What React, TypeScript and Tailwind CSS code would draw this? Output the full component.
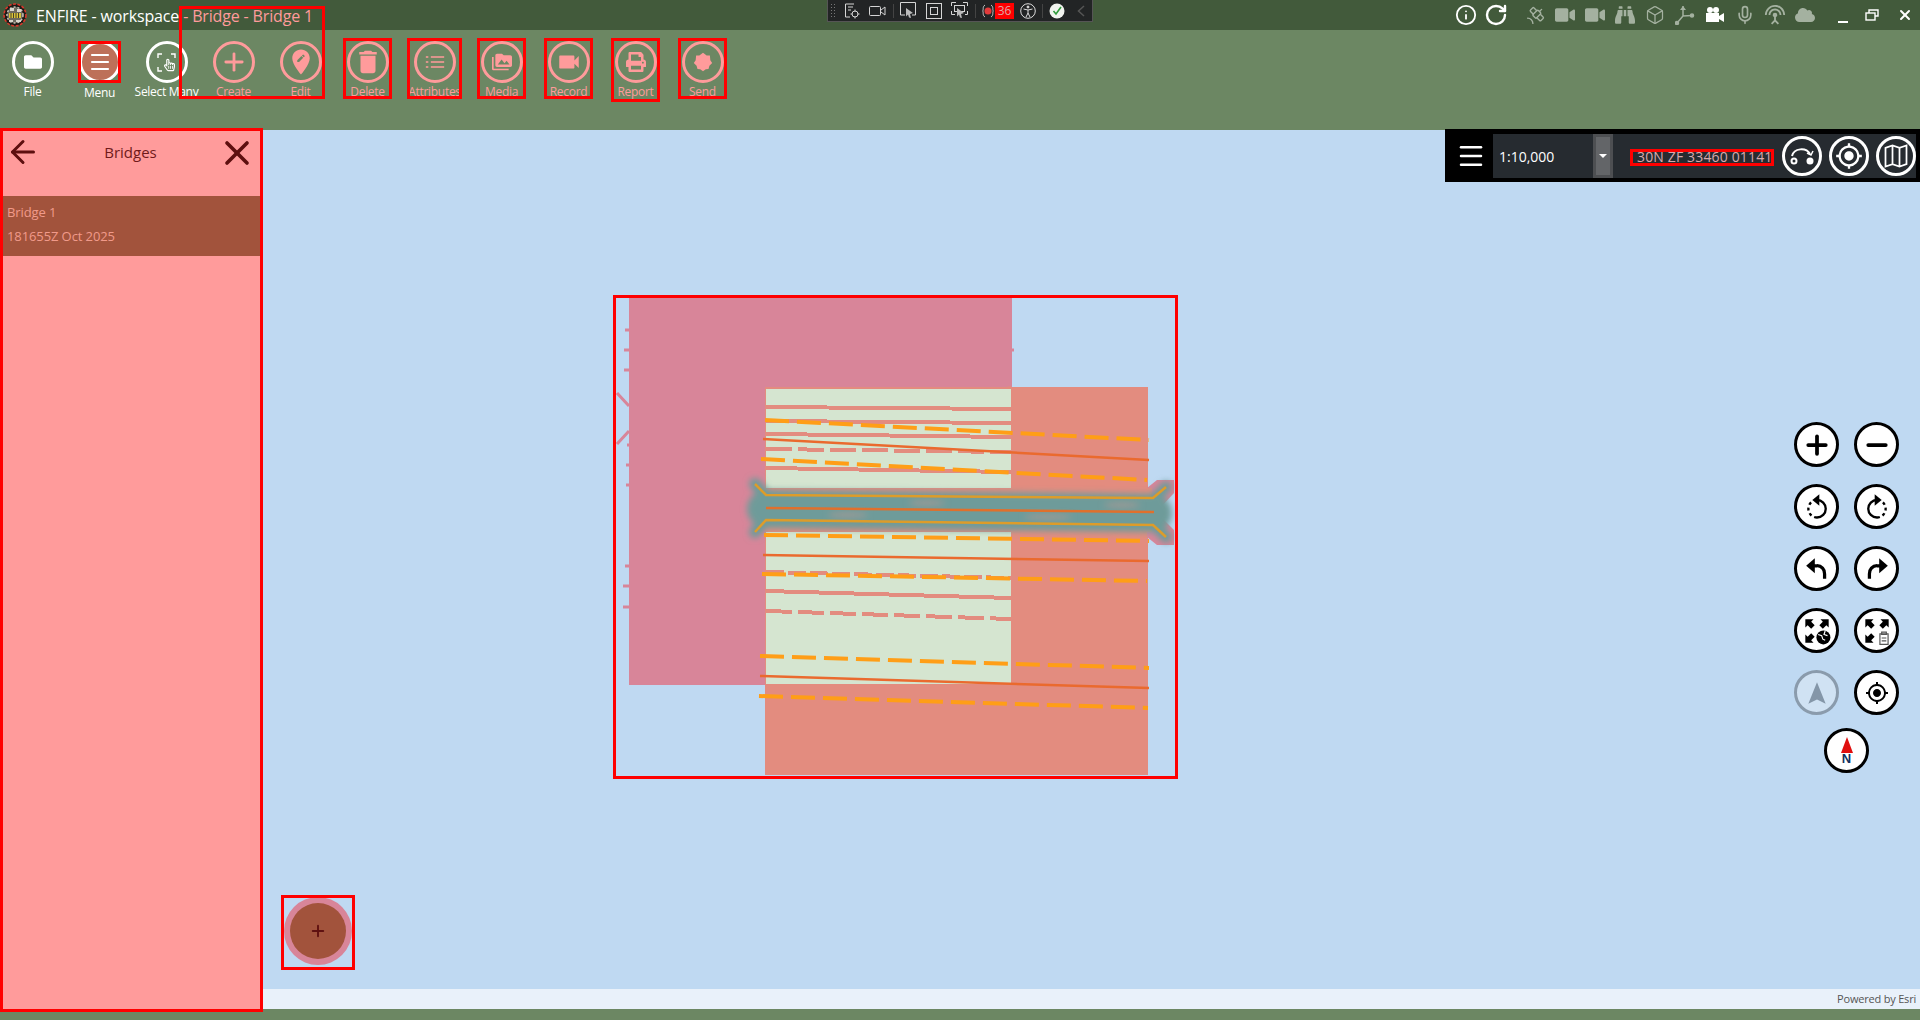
import type { ReactNode } from 'react'
import { Plus, Minus, Menu, Info, RotateCw, Box, Mic, X, ArrowLeft, Satellite } from 'lucide-react'
import { FaFolder, FaBinoculars, FaCloud, FaVideo, FaPrint, FaRegHandPointer } from 'react-icons/fa'
import { MdDelete, MdEditLocation, MdPermMedia, MdVideocam, MdGpsFixed, MdSettingsInputAntenna } from 'react-icons/md'

function SendIcon() {
  return (
    <svg viewBox="0 0 24 24" className="w-[22px] h-[22px]" fill="currentColor">
      <path d="M12 2l4 3h3.500l0.500 5 2 3-3 3-1 3.500-3 0.500-3 2-3-2-3-0.500-1-3.500-3-3 2-3 0.500-5H8z" />
    </svg>
  )
}

function SelectIcon() {
  return (
    <div className="relative w-[19px] h-[19px]">
      <svg viewBox="0 0 19 19" className="w-[19px] h-[19px]" fill="none" stroke="currentColor" strokeWidth="1.400">
        <path d="M1 5V1h4M14 1h4v4M1 14v4h4" />
      </svg>
      <FaRegHandPointer className="absolute left-[7px] top-[5px] w-[11px] h-[14px]" />
    </div>
  )
}

function AttrIcon() {
  return (
    <svg viewBox="0 0 24 24" className="w-[20px] h-[20px]" fill="none" stroke="currentColor" strokeWidth="1.800">
      <path d="M1 6h3M7 6h16M1 12h3M7 12h16M1 18h3M7 18h16" />
    </svg>
  )
}

function ToolItem({ label, tint, icon, fill }: { label: string; tint?: boolean; icon: ReactNode; fill?: boolean }) {
  return (
    <div className={`w-[67px] flex flex-col items-center ${tint ? 'text-[#ff9b9b]' : 'text-white'}`}>
      <div className={`w-[42px] h-[42px] rounded-full border-[3px] border-current flex items-center justify-center ${fill ? 'bg-[#bd7059]' : ''}`}>
        {icon}
      </div>
      <span className={`text-[12px] leading-[16px] whitespace-nowrap tracking-[-0.3px] ${fill ? 'mt-[2px]' : 'mt-px'}`}>{label}</span>
    </div>
  )
}

function Logo() {
  return (
    <svg viewBox="0 0 24 24" className="w-[24px] h-[24px] ml-[3px] shrink-0">
      <circle cx="12" cy="12" r="11" fill="#1d1a16" stroke="#d8362a" strokeWidth="1.600" strokeDasharray="3 1.500" />
      <circle cx="12" cy="12" r="8" fill="#6d6a60" stroke="#c9c5b8" strokeWidth="1.500" strokeDasharray="2 2" />
      <path d="M7 5h4v3H7zM14 6h4v3h-4zM6 17h4v2H6zM13 17h5v2h-5z" fill="#d9d6cc" />
      <rect x="6" y="10" width="12" height="5" fill="#d8c23a" />
      <path d="M8 10v5M10.500 10v5M13 10v5M15.500 10v5" stroke="#222" strokeWidth="0.800" />
    </svg>
  )
}

function MiddleBar() {
  return (
    <div className="absolute left-[827px] top-0 w-[266px] h-[22px] bg-[#222425] border-b border-x border-[#555] flex items-center text-[#d5d5d5]">
      <svg viewBox="0 0 6 16" className="ml-[3px] w-[6px] h-[16px]" fill="#777">
        <path d="M0 1h1v1H0zM3 1h1v1H3zM0 4h1v1H0zM3 4h1v1H3zM0 7h1v1H0zM3 7h1v1H3zM0 10h1v1H0zM3 10h1v1H3zM0 13h1v1H0zM3 13h1v1H3z" />
      </svg>
      <svg viewBox="0 0 16 16" className="ml-[7px] w-[16px] h-[16px]" fill="none" stroke="currentColor">
        <path d="M10 1H1.500v13H6M4 4h5M4 7h3" />
        <circle cx="11" cy="11" r="3" />
        <path d="M11 6.500v2M11 13.500v2M6.500 11h2M13.500 11h2" />
      </svg>
      <svg viewBox="0 0 17 12" className="ml-[9px] w-[17px] h-[12px]" fill="none" stroke="currentColor">
        <rect x="0.500" y="1.500" width="11" height="9" rx="1" />
        <path d="M12 5l4-3v8l-4-3" />
      </svg>
      <div className="ml-[7px] w-px h-[14px] bg-[#444]" />
      <svg viewBox="0 0 17 17" className="ml-[6px] w-[17px] h-[17px]" fill="none" stroke="currentColor">
        <path d="M5 13H0.500V0.500h15V13H12" />
        <path d="M6 6l7 5-3 1 1 4-2-0.500-1-3-2 2z" fill="#bbb" stroke="none" />
      </svg>
      <svg viewBox="0 0 16 16" className="ml-[9px] w-[16px] h-[16px]" fill="none" stroke="currentColor">
        <rect x="0.500" y="0.500" width="15" height="15" />
        <rect x="4.500" y="4.500" width="7" height="7" />
      </svg>
      <svg viewBox="0 0 17 17" className="ml-[9px] w-[17px] h-[17px]" fill="none" stroke="currentColor">
        <path d="M0.500 4V0.500H5M12 0.500h4.500V4M0.500 9v3.500H4M16.500 9v3.500H14" />
        <rect x="3.500" y="3.500" width="10" height="6" />
        <path d="M6 6l7 5-3 1 1 4-2-0.500-1-3-2 2z" fill="#bbb" stroke="none" />
      </svg>
      <div className="ml-[7px] w-px h-[14px] bg-[#444]" />
      <svg viewBox="0 0 12 14" className="ml-[6px] w-[12px] h-[14px]" fill="none" stroke="#ccc">
        <path d="M3 1C0 3 2 6 0.500 7 2 8 0 11 3 13M9 1c3 2 1 5 2.500 6C10 8 12 11 9 13" />
        <circle cx="6" cy="7" r="3.500" fill="#e23b3b" stroke="none" />
      </svg>
      <span className="ml-px w-[19px] h-[16px] bg-[#ff0000] text-[#e2a5a5] text-[12px] leading-[16px] text-center">36</span>
      <svg viewBox="0 0 16 16" className="ml-[6px] w-[16px] h-[16px]" fill="none" stroke="#ddd">
        <circle cx="8" cy="8" r="7.300" />
        <circle cx="8" cy="4" r="1" fill="#ddd" />
        <path d="M3.500 6L8 7l4.500-1M8 7v3l-2 4M8 10l2 4" />
      </svg>
      <div className="ml-[6px] w-px h-[14px] bg-[#444]" />
      <svg viewBox="0 0 16 16" className="ml-[6px] w-[16px] h-[16px]" fill="none">
        <circle cx="8" cy="8" r="7.500" fill="#f1f3ef" />
        <path d="M4.500 8l2.500 3 5-7" stroke="#2f9b3b" strokeWidth="1.600" />
      </svg>
      <svg viewBox="0 0 8 12" className="ml-[12px] w-[8px] h-[12px]" fill="none" stroke="#555" strokeWidth="1.500">
        <path d="M7 1L1.500 6 7 11" />
      </svg>
    </div>
  )
}

function StatusIcons() {
  return (
    <div className="ml-auto flex items-center h-full">
      <Info className="w-[22px] h-[22px] text-white" strokeWidth={2} />
      <RotateCw className="w-[24px] h-[24px] ml-[7px] text-white" strokeWidth={2.400} />
      <div className="flex items-center text-[#a4b1a0]">
        <Satellite className="w-[21px] h-[21px] ml-[17px]" strokeWidth={1.600} />
        <FaVideo className="w-[20px] h-[20px] ml-[9px]" />
        <FaVideo className="w-[20px] h-[20px] ml-[10px]" />
        <FaBinoculars className="w-[20px] h-[20px] ml-[10px]" />
        <Box className="w-[20px] h-[20px] ml-[10px]" strokeWidth={1.500} />
        <svg viewBox="0 0 20 20" className="w-[20px] h-[20px] ml-[10px]" fill="currentColor" stroke="currentColor" strokeWidth="1.500">
          <path d="M8 1v10l9-0.500M8 11l-6 7" fill="none" />
          <path d="M5 5l3-4 3 4z" stroke="none" />
          <circle cx="17" cy="10.500" r="1.500" />
          <circle cx="2" cy="18" r="1.500" />
        </svg>
      </div>
      <svg viewBox="0 0 20 20" className="w-[20px] h-[20px] ml-[10px]" fill="#fff">
        <circle cx="5" cy="5" r="3" />
        <circle cx="11" cy="5" r="3" />
        <path d="M1 8h13v9H1zM14 11l5-3v9l-5-3z" />
      </svg>
      <div className="flex items-center text-[#a4b1a0]">
        <Mic className="w-[20px] h-[20px] ml-[10px]" />
        <MdSettingsInputAntenna className="w-[22px] h-[22px] ml-[9px]" />
        <FaCloud className="w-[20px] h-[20px] ml-[9px]" />
      </div>
      <svg viewBox="0 0 10 10" className="w-[10px] h-[10px] ml-[23px] mt-[6px]" stroke="#fff" strokeWidth="2">
        <path d="M0 9h10" />
      </svg>
      <svg viewBox="0 0 14 12" className="w-[14px] h-[12px] ml-[17px]" fill="none" stroke="#fff" strokeWidth="1.400">
        <rect x="1" y="4" width="9" height="7" />
        <path d="M4 4V1h9v6h-3" />
      </svg>
      <X className="w-[16px] h-[16px] ml-[18px] mr-[7px] text-white" strokeWidth={3} />
    </div>
  )
}

function ScaleCircle({ children }: { children: ReactNode }) {
  return (
    <div className="w-[40px] h-[40px] rounded-full border-[3px] border-white flex items-center justify-center">
      {children}
    </div>
  )
}

function ScaleBar() {
  return (
    <div className="absolute right-0 top-[-1px] w-[475px] h-[53px] bg-black flex pt-[5px] pb-[4px] px-[4px]">
      <div className="w-[44px] flex items-center justify-center text-white">
        <Menu className="w-[30px] h-[30px]" strokeWidth={2} />
      </div>
      <div className="flex-1 flex items-center bg-[#262b30] text-white">
        <span className="w-[100px] pl-[6px] text-[14px]">1:10,000</span>
        <div className="w-[20px] self-stretch border-[3px] border-[#4d4f52] bg-[#636568] flex items-center justify-center">
          <div className="w-0 h-0 border-x-[4px] border-x-transparent border-t-[4px] border-t-white" />
        </div>
        <span className="ml-[24px] w-[140px] text-[14px] text-[#d9a9ad] whitespace-nowrap tracking-[0.15px]">30N ZF 33460 01141</span>
        <div className="ml-auto flex gap-[7px]">
          <ScaleCircle>
            <svg viewBox="0 0 26 20" className="w-[26px] h-[20px]" fill="none" stroke="#fff" strokeWidth="2">
              <circle cx="5" cy="15" r="2.500" />
              <path d="M3 10C5 2 17 1 21 8" />
              <path d="M18 7l4 2 2-4" strokeWidth="1.500" />
              <circle cx="21" cy="15" r="3.500" fill="#fff" stroke="none" />
            </svg>
          </ScaleCircle>
          <ScaleCircle>
            <MdGpsFixed className="w-[28px] h-[28px] text-white" />
          </ScaleCircle>
          <ScaleCircle>
            <svg viewBox="0 0 24 24" className="w-[28px] h-[28px]" fill="none" stroke="#fff" strokeWidth="1.500">
              <path d="M3 5l6-2 6 2 6-2v16l-6 2-6-2-6 2zM9 3v16M15 5v16" />
            </svg>
          </ScaleCircle>
        </div>
      </div>
    </div>
  )
}

function RoundBtn({ children, off }: { children: ReactNode; off?: boolean }) {
  return (
    <div className={`w-[45px] h-[45px] rounded-full border-[3.500px] flex items-center justify-center ${off ? 'border-[#8a9bac] bg-[#d0e2f3] text-[#8496a8]' : 'border-black bg-white text-black'}`}>
      {children}
    </div>
  )
}

function RotateIcon({ flip }: { flip?: boolean }) {
  return (
    <svg viewBox="0 0 24 24" className={`w-[28px] h-[28px] ${flip ? '-scale-x-100' : ''}`} fill="none" stroke="currentColor" strokeWidth="2">
      <path d="M12 6a7.500 7.500 0 0 1 0 15" />
      <path d="M12 21a7.500 7.500 0 0 1-5-13" strokeDasharray="2.500 2.500" />
      <path d="M14 1v10L8 6z" fill="currentColor" stroke="none" />
    </svg>
  )
}

function UndoIcon({ flip }: { flip?: boolean }) {
  return (
    <svg viewBox="0 0 24 24" className={`w-[26px] h-[26px] ${flip ? '-scale-x-100' : ''}`} fill="none" stroke="currentColor" strokeWidth="3">
      <path d="M8 9h4a7 7 0 0 1 7 7.500V21" />
      <path d="M10 2v14L2 9z" fill="currentColor" stroke="none" />
    </svg>
  )
}

function ExtentIcon({ children }: { children: ReactNode }) {
  return (
    <svg viewBox="0 0 24 24" className="w-[28px] h-[28px]" fill="currentColor">
      <path d="M2 2h7L7 4l3 3-3 3-3-3-2 2zM22 2v7l-2-2-3 3-3-3 3-3-2-2zM2 22v-7l2 2 3-3 3 3-3 3 2 2z" />
      {children}
    </svg>
  )
}

function MapButtons() {
  return (
    <div className="absolute right-[21px] top-[292px] w-[105px] flex flex-col items-center">
      <div className="grid grid-cols-2 gap-x-[15px] gap-y-[17px]">
        <RoundBtn><Plus className="w-[30px] h-[30px]" strokeWidth={3} /></RoundBtn>
        <RoundBtn><Minus className="w-[30px] h-[30px]" strokeWidth={3} /></RoundBtn>
        <RoundBtn><RotateIcon /></RoundBtn>
        <RoundBtn><RotateIcon flip /></RoundBtn>
        <RoundBtn><UndoIcon /></RoundBtn>
        <RoundBtn><UndoIcon flip /></RoundBtn>
        <RoundBtn>
          <ExtentIcon>
            <circle cx="17.500" cy="17.500" r="6" />
            <path d="M13 15l3 1 1 3 2 1M19 12l-1 3 3 1" stroke="#fff" fill="none" />
          </ExtentIcon>
        </RoundBtn>
        <RoundBtn>
          <ExtentIcon>
            <path d="M14.500 14.500h7v9h-7zM16 13h4v2h-4z" fill="#fff" stroke="#555" />
            <path d="M16 18h4M16 20.500h4" stroke="#555" fill="none" />
          </ExtentIcon>
        </RoundBtn>
        <RoundBtn off>
          <svg viewBox="0 0 24 24" className="w-[26px] h-[26px]" fill="currentColor">
            <path d="M12 2l8 20-8-4-8 4z" />
          </svg>
        </RoundBtn>
        <RoundBtn><MdGpsFixed className="w-[24px] h-[24px]" /></RoundBtn>
      </div>
      <div className="mt-[13px]">
        <RoundBtn>
          <div className="flex flex-col items-center">
            <div className="w-0 h-0 border-x-[6px] border-x-transparent border-b-[16px] border-b-[#e00f0f]" />
            <span className="text-[13px] leading-[11px] font-bold text-[#10315f] font-['Liberation_Sans',sans-serif]">N</span>
          </div>
        </RoundBtn>
      </div>
    </div>
  )
}

function MapDrawing() {
  const dash = { stroke: '#ff9e17', strokeWidth: 4, strokeDasharray: '24 8', fill: 'none' }
  const solid = { stroke: '#ea6a2e', strokeWidth: 2.500, fill: 'none' }
  const salmon = { stroke: '#e38c7f', strokeWidth: 4, fill: 'none' }
  return (
    <svg viewBox="600 280 600 520" className="absolute left-[600px] top-[150px] w-[600px] h-[520px]">
      <defs>
        <filter id="bridgeGlow" x="-10%" y="-60%" width="120%" height="220%">
          <feGaussianBlur stdDeviation="3" />
        </filter>
      </defs>
      {/* polygons of the layer */}
      <path d="M629 297h383v100h-247v288H629z" fill="#d88599" />
      <path d="M765 387h383v388H765z" fill="#e38c7f" />
      <path d="M766 389h245v295H766z" fill="#d5e5d0" />
      <g stroke="#d88599" strokeWidth="3" fill="none">
        <path d="M617 393l12 13M617 444l12-13" />
        <path d="M625 330h5M624 350h5M624 370h5M627 445h3M626 465h4M626 485h4M625 566h5M623 586h7M623 607h7M1011 350h3" />
      </g>
      <path d="M941 389l60-1 10-2v3z" fill="#e38c7f" />

      {/* stripes on the pale area */}
      <g shapeRendering="crispEdges">
        <path d="M766 407l245 2M766 421l245 2M766 434l245 3M766 468l245 4" {...salmon} />
        <path d="M766 449l245 3" {...salmon} strokeDasharray="26 6" />
        <path d="M766 572l245 6" {...salmon} strokeDasharray="18 4" />
        <path d="M766 591l245 7" {...salmon} />
        <path d="M766 611l245 8" {...salmon} strokeDasharray="26 6" />
      </g>
      <path d="M765 420l384 20" {...dash} />
      <path d="M763 439l386 21" {...solid} />
      <path d="M761 459l386 21" {...dash} />

      {/* bridge */}
      <path d="M1147 488l10-8h17v13l-13 14v10l13 13v15h-17l-10-8z" fill="#d88599" />
      <path d="M766 488h386v44H766z" fill="#e38c7f" />
      <g filter="url(#bridgeGlow)" fill="none" stroke="#6e9b9a" strokeLinecap="round" strokeLinejoin="round">
        <path d="M766 509l387 4" strokeWidth="38" />
        <path d="M755 484l13 14M755 532l13-14M1166 487l-13 14M1166 537l-13-14" strokeWidth="12" />
      </g>
      <g filter="url(#bridgeGlow)" fill="#a39a94">
        <ellipse cx="927" cy="503" rx="18" ry="2.500" />
        <ellipse cx="848" cy="515" rx="20" ry="2.500" />
        <ellipse cx="1048" cy="517" rx="24" ry="2.500" />
        <ellipse cx="1122" cy="505" rx="18" ry="2.500" />
      </g>
      <g fill="none" strokeWidth="2.500">
        <path d="M755 484l11 11 387 3 13-11" stroke="#dd9c2a" />
        <path d="M755 532l11-12 387 5 13 12" stroke="#dd9c2a" />
        <path d="M766 508l388 4" stroke="#e0702c" />
      </g>

      <path d="M764 535l385 6" {...dash} />
      <path d="M763 555l386 6" {...solid} />
      <path d="M762 574l385 7" {...dash} />
      <path d="M760 656l389 12" {...dash} />
      <path d="M760 676l389 12" {...solid} />
      <path d="M759 696l389 12" {...dash} />
    </svg>
  )
}

const redBoxes = [
  'left-[78px] top-[41px] w-[43px] h-[42px]',
  'left-[179px] top-[6px] w-[146px] h-[93px]',
  'left-[343px] top-[38px] w-[49px] h-[61px]',
  'left-[407px] top-[38px] w-[55px] h-[61px]',
  'left-[477px] top-[38px] w-[49px] h-[61px]',
  'left-[544px] top-[38px] w-[49px] h-[61px]',
  'left-[611px] top-[38px] w-[49px] h-[64px]',
  'left-[678px] top-[38px] w-[49px] h-[61px]',
  'left-[1630px] top-[149px] w-[144px] h-[17px]',
  'left-[613px] top-[295px] w-[565px] h-[484px]',
  'left-[281px] top-[895px] w-[74px] h-[75px]',
]

export default function App() {
  return (
    <div className="relative w-[1920px] h-[1020px] overflow-hidden flex flex-col bg-[#bfd9f2] font-['Open_Sans',sans-serif]">
      {/* title bar */}
      <div className="relative h-[30px] shrink-0 bg-[#425a3b] flex items-center">
        <Logo />
        <span className="ml-[9px] mt-[2px] text-[16px] text-white whitespace-nowrap tracking-[-0.15px]">
          ENFIRE - workspace <span className="text-[#ff9b9b]">- Bridge - Bridge 1</span>
        </span>
        <MiddleBar />
        <StatusIcons />
      </div>

      {/* tool ribbon */}
      <div className="h-[100px] shrink-0 bg-[#6c8763] flex pt-[11px] -ml-px">
        <ToolItem label="File" icon={<FaFolder className="w-[18px] h-[18px]" />} />
        <ToolItem label="Menu" fill icon={<Menu className="w-[24px] h-[24px]" strokeWidth={2.200} />} />
        <ToolItem label="Select Many" icon={<SelectIcon />} />
        <ToolItem label="Create" tint icon={<Plus className="w-[28px] h-[28px]" strokeWidth={2.400} />} />
        <ToolItem label="Edit" tint icon={<MdEditLocation className="w-[30px] h-[30px]" />} />
        <ToolItem label="Delete" tint icon={<MdDelete className="w-[30px] h-[30px]" />} />
        <ToolItem label="Attributes" tint icon={<AttrIcon />} />
        <ToolItem label="Media" tint icon={<MdPermMedia className="w-[20px] h-[20px]" />} />
        <ToolItem label="Record" tint icon={<MdVideocam className="w-[26px] h-[26px]" />} />
        <ToolItem label="Report" tint icon={<FaPrint className="w-[20px] h-[20px]" />} />
        <ToolItem label="Send" tint icon={<SendIcon />} />
      </div>

      {/* map */}
      <div className="relative flex-1">
        <MapDrawing />
        <ScaleBar />
        <MapButtons />
        <div className="absolute left-[284px] top-[767px] w-[68px] h-[68px] rounded-full bg-[#d88599] flex items-center justify-center">
          <div className="w-[56px] h-[56px] rounded-full bg-[#a2533c] flex items-center justify-center">
            <Plus className="w-[18px] h-[18px] text-[#5f1111]" strokeWidth={2.500} />
          </div>
        </div>
      </div>

      <div className="h-[20px] shrink-0 bg-[#e9f1fa] flex items-center justify-end pr-[4px] text-[11px] text-[#555] tracking-[-0.2px]">
        Powered by Esri
      </div>
      <div className="h-[11px] shrink-0 bg-[#6c8763]" />

      {/* side panel */}
      <div className="absolute left-0 top-[128px] w-[263px] h-[884px] border-[3px] border-[#ff0000] bg-[#ff9b9b]">
        <div className="h-[65px] relative flex items-start justify-between pl-[2px] pr-[3px] pt-[3px]">
          <ArrowLeft className="w-[36px] h-[36px] text-[#5e0f0f]" strokeWidth={2} />
          <span className="absolute left-0 right-0 top-[10px] pr-[2px] text-center text-[15px] text-[#701a1a]">Bridges</span>
          <X className="w-[40px] h-[40px] -mt-px text-[#5e0f0f]" strokeWidth={2.200} />
        </div>
        <div className="h-[60px] bg-[#a2533c] text-[#f19a8a] text-[13px] pl-[4px] tracking-[-0.1px]">
          <div className="pt-[7px] leading-[18px]">Bridge 1</div>
          <div className="mt-[6px] leading-[18px]">181655Z Oct 2025</div>
        </div>
      </div>

      {redBoxes.map((b) => (
        <div key={b} className={`absolute border-[3px] border-[#ff0000] pointer-events-none ${b}`} />
      ))}
    </div>
  )
}
